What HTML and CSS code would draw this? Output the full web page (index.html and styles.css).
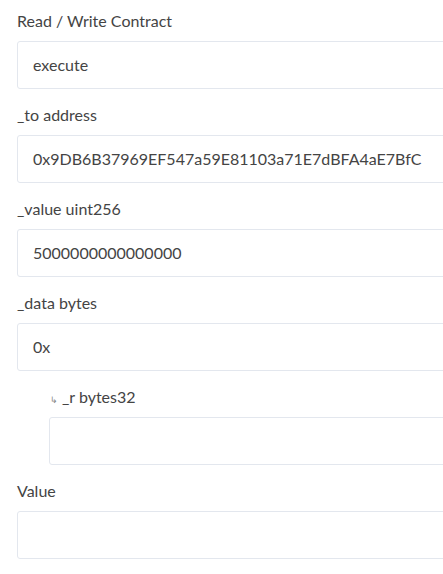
FILE: index.html
```html
<!DOCTYPE html>
<html>
<head>
<meta charset="utf-8">
<link rel="stylesheet" href="styles.css">
</head>
<body>
<div class="form">
  <div class="field">
    <label class="label">Read / Write Contract</label>
    <div class="input">execute</div>
  </div>
  <div class="field">
    <label class="label">_to address</label>
    <div class="input">0x9DB6B37969EF547a59E81103a71E7dBFA4aE7BfC</div>
  </div>
  <div class="field">
    <label class="label">_value uint256</label>
    <div class="input">5000000000000000</div>
  </div>
  <div class="field">
    <label class="label">_data bytes</label>
    <div class="input">0x</div>
  </div>
  <div class="field nested">
    <label class="label"><span class="arrow">↳</span>_r bytes32</label>
    <div class="input"></div>
  </div>
  <div class="field">
    <label class="label">Value</label>
    <div class="input"></div>
  </div>
</div>
</body>
</html>
```
FILE: styles.css
```css
html, body {
  margin: 0;
  padding: 0;
  background: #ffffff;
  overflow: hidden;
}
body {
  font-family: Lato, "Open Sans", sans-serif;
  color: #333333;
}
.form {
  width: 520px;
  padding: 11px 0 0 17px;
  display: flex;
  flex-direction: column;
  gap: 16px;
}
.field {
  display: flex;
  flex-direction: column;
}
.nested {
  padding-left: 32px;
}
.label {
  font-size: 16px;
  font-weight: 400;
  line-height: 20px;
  height: 21px;
  margin-bottom: 9px;
  color: #444444;
}
.arrow {
  font-size: 9px;
  line-height: 0;
  color: #888888;
  margin-right: 4px;
  margin-left: 1px;
}
.input {
  box-sizing: border-box;
  height: 48px;
  border: 1px solid #e3e7ee;
  border-radius: 3px;
  padding: 0 15px;
  font-size: 16px;
  font-weight: 400;
  line-height: 46px;
  color: #444444;
  background: #ffffff;
}
```
